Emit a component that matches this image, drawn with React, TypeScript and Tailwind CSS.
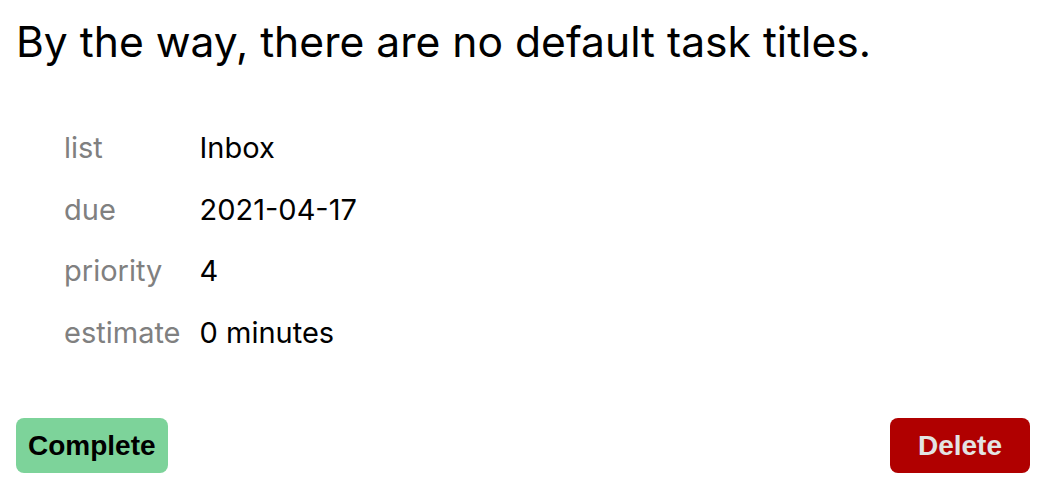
const rows = [
  ["list", "Inbox"],
  ["due", "2021-04-17"],
  ["priority", "4"],
  ["estimate", "0 minutes"],
];

export default function App() {
  return (
    <div className="p-4 font-['Inter',sans-serif] text-black">
      <h1 className="text-[42.6px] leading-[52px]">
        By the way, there are no default task titles.
      </h1>
      <table className="ml-[48px] mt-[49px] text-[29px]">
        <tbody>
          {rows.map(([k, v]) => (
            <tr key={k} className="h-[61.7px]">
              <td className="text-[#808080] pr-[19px]">{k}</td>
              <td>{v}</td>
            </tr>
          ))}
        </tbody>
      </table>
      <div className="flex justify-between mt-[54px]">
        <button className="bg-[#7dd39a] rounded-lg h-[55px] px-[12px] pt-[2px] font-['Liberation_Sans',sans-serif] font-bold text-[28px]">
          Complete
        </button>
        <button className="bg-[#b00000] text-[#e3e3e3] rounded-lg h-[55px] px-[28px] pt-[2px] font-['Liberation_Sans',sans-serif] font-bold text-[28px]">
          Delete
        </button>
      </div>
    </div>
  );
}
